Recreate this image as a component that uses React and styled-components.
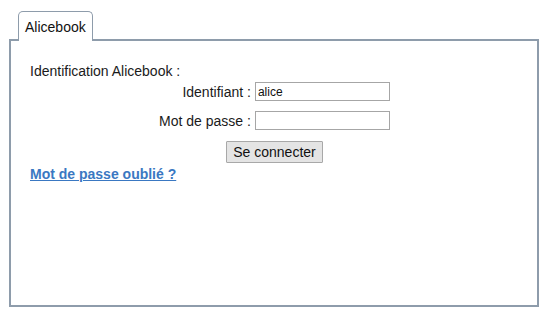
import styled, { createGlobalStyle } from "styled-components"

const Global = createGlobalStyle`
  html, body {
    margin: 0;
    padding: 0;
    background: #ffffff;
  }
  body {
    font-family: "Liberation Sans", Arial, sans-serif;
    font-size: 14px;
    color: #1a1a1a;
  }
`

export default function App(){
    return(
        <Page>
          <Global />
          <Onglets>
            <Onglet>Alicebook</Onglet>
          </Onglets>
          <Panneau>
            <Titre>Identification Alicebook :</Titre>
            <Formulaire>
              <Etiquette>Identifiant :</Etiquette>
              <Champ type="text" defaultValue="alice" />
              <Etiquette>Mot de passe :</Etiquette>
              <Champ type="password" />
            </Formulaire>
            <LigneBouton>
              <Bouton>Se connecter</Bouton>
            </LigneBouton>
            <Lien href="#">Mot de passe oublié ?</Lien>
          </Panneau>
        </Page>
    )
}

const Page = styled.div`
    width: 530px;
    padding: 11px 0 0 9px;
`
const Onglets = styled.div`
    display: flex;
    padding-left: 9px;
`
const Onglet = styled.div`
    position: relative;
    z-index: 1;
    height: 29px;
    margin-bottom: -2px;
    padding: 0 6px;
    display: flex;
    align-items: center;
    background: #ffffff;
    border: 1px solid #8e9cab;
    border-bottom: none;
    border-radius: 5px 5px 0 0;
    font-size: 14px;
    color: #111;
`
const Panneau = styled.div`
    box-sizing: border-box;
    height: 268px;
    border: 2px solid #8e9cab;
    padding: 21px 18px 0 19px;
`
const Titre = styled.div`
    line-height: 18px;
`
const Formulaire = styled.div`
    display: grid;
    grid-template-columns: auto 135px;
    justify-content: center;
    align-items: center;
    column-gap: 4px;
    row-gap: 10px;
    margin-top: 2px;
`
const Etiquette = styled.label`
    text-align: right;
`
const Champ = styled.input`
    box-sizing: border-box;
    height: 19px;
    width: 135px;
    margin: 0;
    padding: 1px 2px;
    border: 1px solid #a6a6a6;
    font-family: "Liberation Sans", Arial, sans-serif;
    font-size: 12px;
    color: #111;
    outline: none;
`
const LigneBouton = styled.div`
    display: flex;
    justify-content: center;
    margin-top: 11px;
`
const Bouton = styled.button`
    height: 22px;
    width: 97px;
    padding: 0;
    background: #e4e4e4;
    border: 1px solid #a8a8a8;
    border-radius: 1px;
    font-family: "Liberation Sans", Arial, sans-serif;
    font-size: 14px;
    color: #111;
`
const Lien = styled.a`
    display: inline-block;
    margin-top: 3px;
    font-weight: 700;
    font-size: 14px;
    color: #3a78c2;
    text-decoration: underline;
`
